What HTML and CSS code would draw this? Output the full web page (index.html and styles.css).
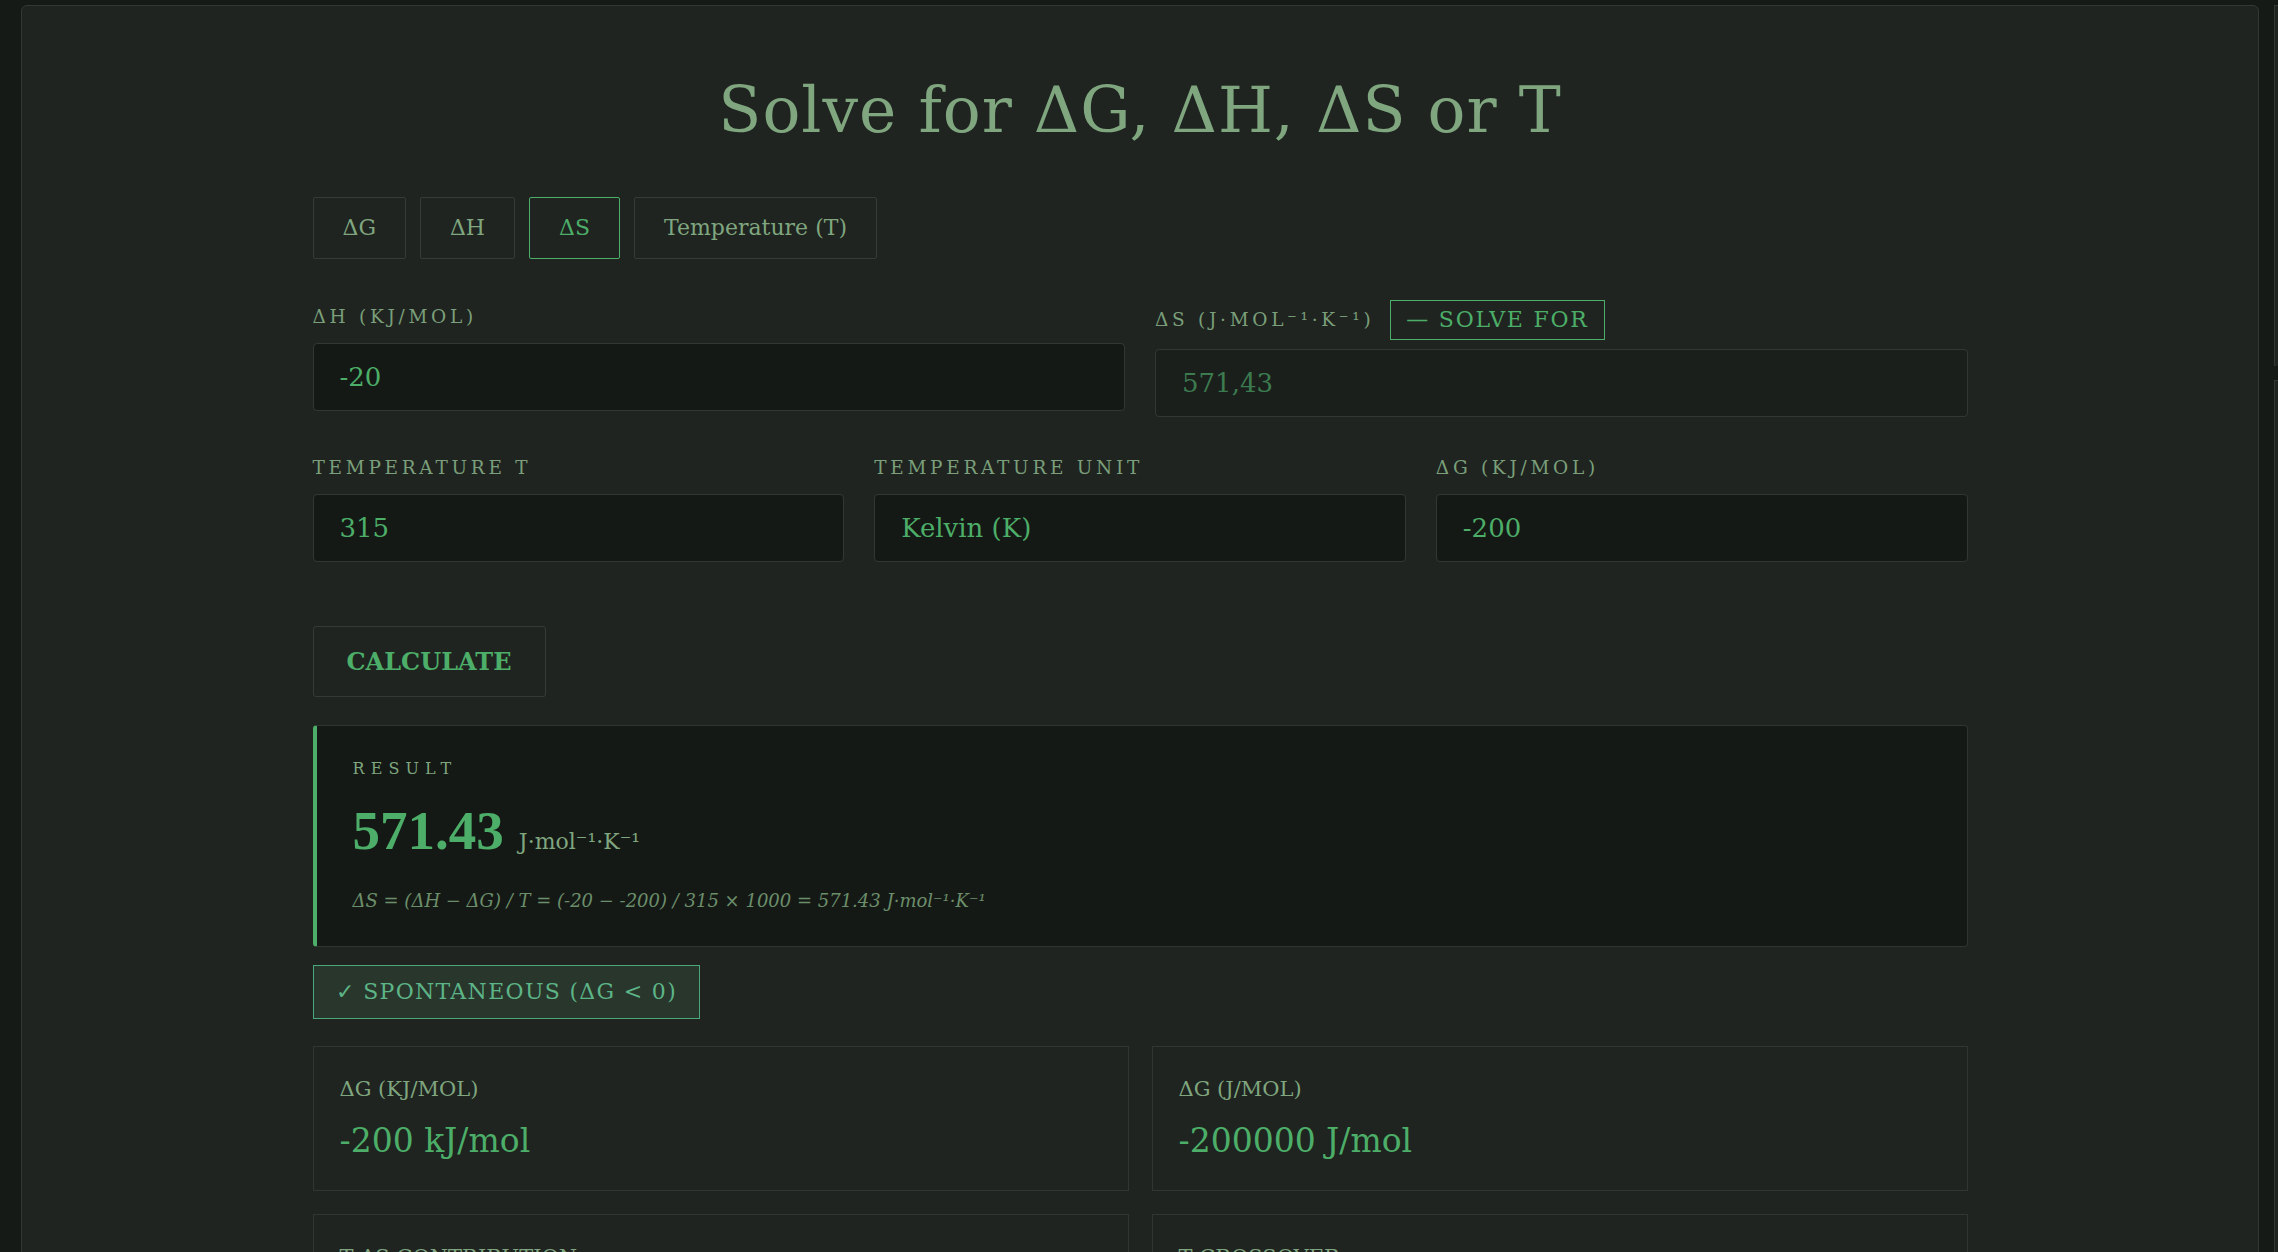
FILE: index.html
```html
<!DOCTYPE html>
<html lang="en">

<head>
    <meta charset="UTF-8">
    <title>Gibbs Free Energy Solver</title>
    <link rel="stylesheet" href="styles.css">
</head>

<body>

    <div class="panel">
        <h1 class="title">Solve for ΔG, ΔH, ΔS or T</h1>

        <div class="wrap">
            <!-- which value to solve for -->
            <div class="tabs">
                <button class="tab">ΔG</button>
                <button class="tab">ΔH</button>
                <button class="tab active">ΔS</button>
                <button class="tab">Temperature (T)</button>
            </div>

            <div class="row two">
                <div class="field">
                    <div class="label">ΔH (kJ/mol)</div>
                    <input class="inp" type="text" value="-20">
                </div>
                <div class="field">
                    <div class="label">ΔS (J·mol⁻¹·K⁻¹) <span class="solving">— Solve for</span></div>
                    <input class="inp solved" type="text" value="571,43" readonly>
                </div>
            </div>

            <div class="row three">
                <div class="field">
                    <div class="label">Temperature T</div>
                    <input class="inp" type="text" value="315">
                </div>
                <div class="field">
                    <div class="label">Temperature unit</div>
                    <select class="inp">
                        <option>Kelvin (K)</option>
                        <option>Celsius (°C)</option>
                    </select>
                </div>
                <div class="field">
                    <div class="label">ΔG (kJ/mol)</div>
                    <input class="inp" type="text" value="-200">
                </div>
            </div>

            <button class="calc">Calculate</button>

            <div class="result">
                <div class="result-label">Result</div>
                <div class="result-value"><span class="num">571.43</span> <span class="unit">J·mol⁻¹·K⁻¹</span></div>
                <div class="formula">ΔS = (ΔH − ΔG) / T = (-20 − -200) / 315 × 1000 = 571.43 J·mol⁻¹·K⁻¹</div>
            </div>

            <div class="verdict">✓ Spontaneous (ΔG &lt; 0)</div>

            <div class="stats">
                <div class="stat">
                    <div class="stat-label">ΔG (kJ/mol)</div>
                    <div class="stat-value">-200 kJ/mol</div>
                </div>
                <div class="stat">
                    <div class="stat-label">ΔG (J/mol)</div>
                    <div class="stat-value">-200000 J/mol</div>
                </div>
                <div class="stat">
                    <div class="stat-label">T·ΔS contribution</div>
                    <div class="stat-value">180 kJ/mol</div>
                </div>
                <div class="stat">
                    <div class="stat-label">T crossover</div>
                    <div class="stat-value">—</div>
                </div>
            </div>
        </div>
    </div>

    <div class="side">
        <div class="side-box short"></div>
        <div class="side-box"></div>
    </div>

</body>

</html>
```

FILE: styles.css
```css
body {
    margin: 0;
    padding: 5px 0 0 21px;
    background: #151a16;
    font-family: "DejaVu Serif", serif;
    display: flex;
    gap: 15px;
    overflow: hidden;
    height: 1247px;
}

.panel {
    flex: 0 0 2238px;
    box-sizing: border-box;
    background: #1f2420;
    border: 1px solid #323933;
    border-radius: 6px;
    padding-top: 67px;
    min-height: 1400px;
}

.title {
    margin: 0 0 48px;
    text-align: center;
    font-weight: normal;
    font-size: 63px;
    line-height: 1.2;
    letter-spacing: 1px;
    color: #7fa67f;
}

.wrap {
    width: 1655px;
    margin: 0 auto;
}

.tabs {
    display: flex;
    gap: 14px;
    margin-bottom: 41px;
}

.tab {
    font-family: inherit;
    font-size: 22px;
    line-height: 26px;
    padding: 17px 29px;
    background: transparent;
    color: #7fa67f;
    border: 1px solid #353c36;
    border-radius: 2px;
}

.tab.active {
    color: #4cae68;
    border-color: #4cae68;
}

.row {
    display: grid;
    align-items: start;
    margin-bottom: 34px;
}

.row.two {
    grid-template-columns: 1fr 1fr;
    gap: 30px;
}

.row.three {
    grid-template-columns: 1fr 1fr 1fr;
    gap: 30px;
}

.label {
    display: flex;
    align-items: center;
    gap: 16px;
    min-height: 34px;
    margin-bottom: 9px;
    font-size: 18.5px;
    letter-spacing: 0.2em;
    text-transform: uppercase;
    color: #7a9f7a;
}

.solving {
    padding: 0 15px;
    line-height: 38px;
    border: 1px solid #4cae68;
    color: #4cae68;
    font-size: 22px;
    letter-spacing: 0.08em;
}

.inp {
    display: block;
    width: 100%;
    box-sizing: border-box;
    height: 68px;
    padding: 0 26px;
    font-family: inherit;
    font-size: 26px;
    color: #4cae68;
    background: #151915;
    border: 1px solid #313832;
    border-radius: 4px;
    outline: none;
    appearance: none;
}

.inp.solved {
    background: #1a1f1b;
    color: #3c7a50;
}

.calc {
    display: block;
    margin-top: 64px;
    width: 233px;
    height: 71px;
    font-family: inherit;
    font-weight: bold;
    font-size: 24px;
    text-transform: uppercase;
    color: #4cae68;
    background: transparent;
    border: 1px solid #343b35;
    border-radius: 3px;
}

.result {
    margin-top: 28px;
    padding: 33px 36px 35px;
    background: #151915;
    border: 1px solid #2f3630;
    border-left: 4px solid #4cae68;
    border-radius: 4px;
}

.result-label {
    font-size: 16px;
    line-height: 20px;
    letter-spacing: 0.38em;
    text-transform: uppercase;
    color: #7fa67f;
}

.result-value {
    margin-top: 24px;
    line-height: 56px;
    color: #4cae68;
}

.num {
    font-family: "Liberation Serif", serif;
    font-size: 55px;
    font-weight: bold;
}

.unit {
    font-size: 22px;
    margin-left: 10px;
    color: #7fa67f;
}

.formula {
    margin-top: 18px;
    font-size: 18px;
    font-style: italic;
    color: #6b8e6b;
}

.verdict {
    display: inline-block;
    margin-top: 18px;
    padding: 0 22px;
    line-height: 52px;
    font-size: 22px;
    letter-spacing: 0.06em;
    text-transform: uppercase;
    color: #5cb487;
    background: #29362c;
    border: 1px solid #4aa87a;
}

.stats {
    display: grid;
    grid-template-columns: 1fr 1fr;
    gap: 23px;
    margin-top: 27px;
}

.stat {
    height: 145px;
    box-sizing: border-box;
    padding: 30px 26px;
    border: 1px solid #303731;
}

.stat-label {
    font-size: 21px;
    text-transform: uppercase;
    color: #7fa67f;
}

.stat-value {
    margin-top: 20px;
    font-size: 33px;
    color: #4cae68;
}

.side {
    display: flex;
    flex-direction: column;
    gap: 14px;
    flex: 0 0 40px;
}

.side-box {
    flex: 1;
    background: #1f2420;
    border-left: 1px solid #323933;
    border-top: 1px solid #323933;
}

.side-box.short {
    flex: 0 0 360px;
}
```
